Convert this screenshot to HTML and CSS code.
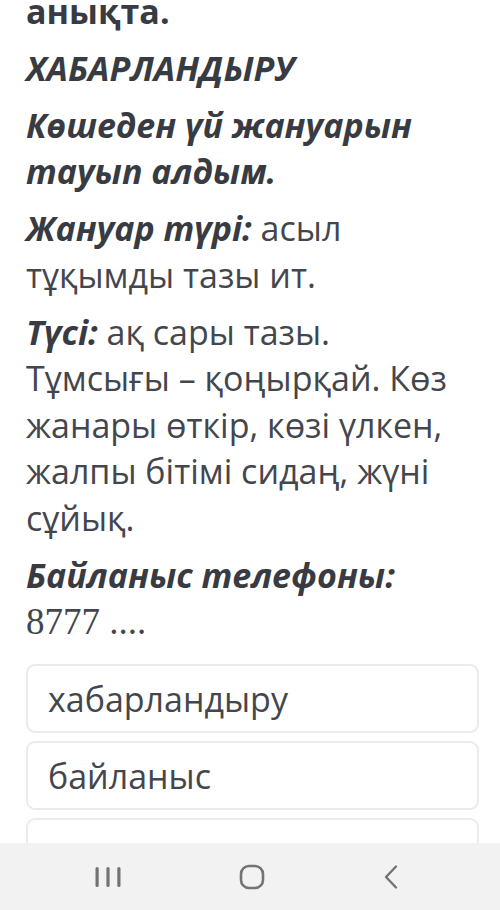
FILE: index.html
```html
<!DOCTYPE html>
<html lang="kk">
<head>
<meta charset="utf-8">
<title>Хабарландыру</title>
<link rel="stylesheet" href="styles.css">
</head>
<body>
<main class="content">
  <p class="para first"><b class="head">анықта.</b></p>
  <p class="para"><b class="bi">ХАБАРЛАНДЫРУ</b></p>
  <p class="para"><b class="bi">Көшеден үй жануарын тауып алдым.</b></p>
  <p class="para"><b class="bi">Жануар түрі:</b> асыл тұқымды тазы ит.</p>
  <p class="para"><b class="bi">Түсі:</b> ақ сары тазы. Тұмсығы – қоңырқай. Көз жанары өткір, көзі үлкен, жалпы бітімі сидаң, жүні сұйық.</p>
  <p class="para"><b class="bi">Байланыс телефоны:</b><br><span class="serif">8777 ....</span></p>

  <div class="options">
    <div class="option">хабарландыру</div>
    <div class="option">байланыс</div>
    <div class="option">&nbsp;</div>
  </div>
</main>

<nav class="navbar">
  <svg class="nav-icon" width="28" height="24" viewBox="0 0 28 24">
    <rect x="1.5" y="2" width="3.2" height="20" rx="1.6" fill="#737373"/>
    <rect x="12.4" y="2" width="3.2" height="20" rx="1.6" fill="#737373"/>
    <rect x="23.3" y="2" width="3.2" height="20" rx="1.6" fill="#737373"/>
  </svg>
  <svg class="nav-icon" width="26" height="26" viewBox="0 0 26 26">
    <rect x="2" y="2" width="22" height="22" rx="8" fill="none" stroke="#737373" stroke-width="2.6"/>
  </svg>
  <svg class="nav-icon" width="18" height="26" viewBox="0 0 18 26">
    <path d="M14 2.5 L4 13 L14 23.5" fill="none" stroke="#737373" stroke-width="2.4" stroke-linecap="round" stroke-linejoin="round"/>
  </svg>
</nav>
</body>
</html>
```

FILE: styles.css
```css
html, body {
  margin: 0;
  padding: 0;
  background: #ffffff;
}

body {
  width: 500px;
  height: 910px;
  overflow: hidden;
  font-family: "Open Sans", "Noto Sans", sans-serif;
  color: #43464c;
}

.content {
  padding: 0 21px 0 26px;
}

.para {
  margin: 0 0 10.5px;
  font-size: 34px;
  line-height: 46.5px;
}

.para.first {
  margin-top: -12.5px;
}

.head {
  font-weight: 700;
  color: #383b42;
}

.bi {
  font-weight: 700;
  font-style: italic;
  color: #383b42;
}

.serif {
  font-family: "Liberation Serif", "Times New Roman", serif;
  font-size: 37px;
}

.options {
  display: flex;
  flex-direction: column;
  gap: 8px;
  margin-top: 18px;
}

.option {
  height: 69px;
  box-sizing: border-box;
  border: 2px solid #ebebeb;
  border-radius: 9px;
  background: #ffffff;
  padding: 10.5px 20px 0;
  font-size: 34px;
  line-height: 46.5px;
  color: #43464c;
}

.navbar {
  position: fixed;
  left: 0;
  right: 0;
  bottom: 0;
  height: 67px;
  background: #f2f2f2;
  display: flex;
  align-items: center;
  justify-content: space-between;
  padding: 0 100px 0 94px;
  box-sizing: border-box;
}

.nav-icon {
  display: block;
}
```
